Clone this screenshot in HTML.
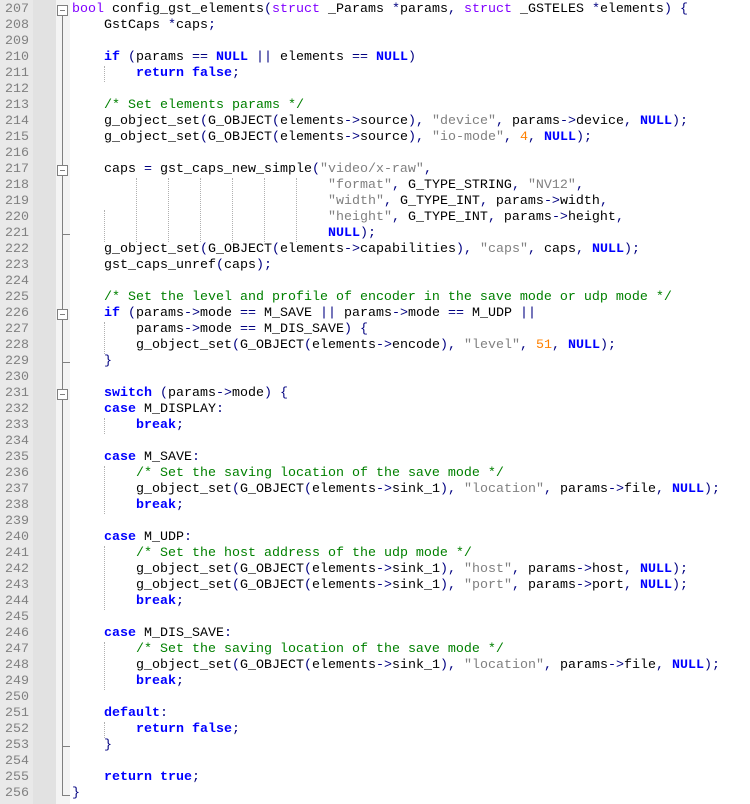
<!DOCTYPE html>
<html><head><meta charset="utf-8"><style>
html,body{margin:0;padding:0;background:#fff;width:750px;height:804px;overflow:hidden;position:relative}
#ln{position:absolute;left:0;top:0;width:33px;height:804px;background:#e9e9e9}
#ln2{position:absolute;left:33px;top:0;width:23px;height:804px;background:#e2e2e2}
#fm{position:absolute;left:56px;top:0;width:14px;height:804px;background:#f4f4f4}
.nums{position:absolute;left:0;top:2px;width:29px;text-align:right;color:#808080}
pre,.nums{font-family:"Liberation Mono",monospace;font-size:13.33px;line-height:16px;margin:0}
pre{position:absolute;left:72px;top:2px;color:#000}
.k{color:#0000ff;font-weight:bold}.t{color:#8000ff}.s{color:#808080}.n{color:#ff8000}.c{color:#008000}.o{color:#000080}
.v{position:absolute;width:1px;background:#808080}
.h{position:absolute;height:1px;background:#808080}
.b{position:absolute;width:9px;height:9px;border:1px solid #808080;background:#fff}
.b:after{content:"";position:absolute;left:2px;top:4px;width:5px;height:1px;background:#808080}
.g{position:absolute;width:0;border-left:1px dotted #b0b0b0}
</style></head><body>
<div id="ln"></div><div id="ln2"></div><div id="fm"></div>
<div class="nums">207<br>208<br>209<br>210<br>211<br>212<br>213<br>214<br>215<br>216<br>217<br>218<br>219<br>220<br>221<br>222<br>223<br>224<br>225<br>226<br>227<br>228<br>229<br>230<br>231<br>232<br>233<br>234<br>235<br>236<br>237<br>238<br>239<br>240<br>241<br>242<br>243<br>244<br>245<br>246<br>247<br>248<br>249<br>250<br>251<br>252<br>253<br>254<br>255<br>256</div>
<div class="v" style="left:62px;top:15px;height:781px"></div>
<div class="h" style="left:62px;top:795px;width:8px"></div>
<div class="h" style="left:62px;top:234px;width:8px"></div>
<div class="h" style="left:62px;top:362px;width:8px"></div>
<div class="h" style="left:62px;top:746px;width:8px"></div>
<div class="b" style="left:57px;top:5px"></div>
<div class="b" style="left:57px;top:165px"></div>
<div class="b" style="left:57px;top:309px"></div>
<div class="b" style="left:57px;top:389px"></div>
<div class="g" style="left:104px;top:66px;height:16px"></div>
<div class="g" style="left:104px;top:210px;height:32px"></div>
<div class="g" style="left:136px;top:178px;height:64px"></div>
<div class="g" style="left:168px;top:178px;height:64px"></div>
<div class="g" style="left:200px;top:178px;height:64px"></div>
<div class="g" style="left:232px;top:178px;height:64px"></div>
<div class="g" style="left:264px;top:178px;height:64px"></div>
<div class="g" style="left:296px;top:178px;height:64px"></div>
<div class="g" style="left:104px;top:322px;height:32px"></div>
<div class="g" style="left:104px;top:418px;height:16px"></div>
<div class="g" style="left:104px;top:466px;height:48px"></div>
<div class="g" style="left:104px;top:546px;height:64px"></div>
<div class="g" style="left:104px;top:642px;height:48px"></div>
<div class="g" style="left:104px;top:722px;height:16px"></div>
<pre><span class="t">bool</span> config_gst_elements<span class="o">(</span><span class="t">struct</span> _Params <span class="o">*</span>params<span class="o">,</span> <span class="t">struct</span> _GSTELES <span class="o">*</span>elements<span class="o">)</span> <span class="o">{</span>
    GstCaps <span class="o">*</span>caps<span class="o">;</span>

    <span class="k">if</span> <span class="o">(</span>params <span class="o">==</span> <span class="k">NULL</span> <span class="o">||</span> elements <span class="o">==</span> <span class="k">NULL</span><span class="o">)</span>
        <span class="k">return</span> <span class="k">false</span><span class="o">;</span>

    <span class="c">/* Set elements params */</span>
    g_object_set<span class="o">(</span>G_OBJECT<span class="o">(</span>elements<span class="o">-&gt;</span>source<span class="o">),</span> <span class="s">"device"</span><span class="o">,</span> params<span class="o">-&gt;</span>device<span class="o">,</span> <span class="k">NULL</span><span class="o">);</span>
    g_object_set<span class="o">(</span>G_OBJECT<span class="o">(</span>elements<span class="o">-&gt;</span>source<span class="o">),</span> <span class="s">"io-mode"</span><span class="o">,</span> <span class="n">4</span><span class="o">,</span> <span class="k">NULL</span><span class="o">);</span>

    caps <span class="o">=</span> gst_caps_new_simple<span class="o">(</span><span class="s">"video/x-raw"</span><span class="o">,</span>
                                <span class="s">"format"</span><span class="o">,</span> G_TYPE_STRING<span class="o">,</span> <span class="s">"NV12"</span><span class="o">,</span>
                                <span class="s">"width"</span><span class="o">,</span> G_TYPE_INT<span class="o">,</span> params<span class="o">-&gt;</span>width<span class="o">,</span>
                                <span class="s">"height"</span><span class="o">,</span> G_TYPE_INT<span class="o">,</span> params<span class="o">-&gt;</span>height<span class="o">,</span>
                                <span class="k">NULL</span><span class="o">);</span>
    g_object_set<span class="o">(</span>G_OBJECT<span class="o">(</span>elements<span class="o">-&gt;</span>capabilities<span class="o">),</span> <span class="s">"caps"</span><span class="o">,</span> caps<span class="o">,</span> <span class="k">NULL</span><span class="o">);</span>
    gst_caps_unref<span class="o">(</span>caps<span class="o">);</span>

    <span class="c">/* Set the level and profile of encoder in the save mode or udp mode */</span>
    <span class="k">if</span> <span class="o">(</span>params<span class="o">-&gt;</span>mode <span class="o">==</span> M_SAVE <span class="o">||</span> params<span class="o">-&gt;</span>mode <span class="o">==</span> M_UDP <span class="o">||</span>
        params<span class="o">-&gt;</span>mode <span class="o">==</span> M_DIS_SAVE<span class="o">)</span> <span class="o">{</span>
        g_object_set<span class="o">(</span>G_OBJECT<span class="o">(</span>elements<span class="o">-&gt;</span>encode<span class="o">),</span> <span class="s">"level"</span><span class="o">,</span> <span class="n">51</span><span class="o">,</span> <span class="k">NULL</span><span class="o">);</span>
    <span class="o">}</span>

    <span class="k">switch</span> <span class="o">(</span>params<span class="o">-&gt;</span>mode<span class="o">)</span> <span class="o">{</span>
    <span class="k">case</span> M_DISPLAY<span class="o">:</span>
        <span class="k">break</span><span class="o">;</span>

    <span class="k">case</span> M_SAVE<span class="o">:</span>
        <span class="c">/* Set the saving location of the save mode */</span>
        g_object_set<span class="o">(</span>G_OBJECT<span class="o">(</span>elements<span class="o">-&gt;</span>sink_1<span class="o">),</span> <span class="s">"location"</span><span class="o">,</span> params<span class="o">-&gt;</span>file<span class="o">,</span> <span class="k">NULL</span><span class="o">);</span>
        <span class="k">break</span><span class="o">;</span>

    <span class="k">case</span> M_UDP<span class="o">:</span>
        <span class="c">/* Set the host address of the udp mode */</span>
        g_object_set<span class="o">(</span>G_OBJECT<span class="o">(</span>elements<span class="o">-&gt;</span>sink_1<span class="o">),</span> <span class="s">"host"</span><span class="o">,</span> params<span class="o">-&gt;</span>host<span class="o">,</span> <span class="k">NULL</span><span class="o">);</span>
        g_object_set<span class="o">(</span>G_OBJECT<span class="o">(</span>elements<span class="o">-&gt;</span>sink_1<span class="o">),</span> <span class="s">"port"</span><span class="o">,</span> params<span class="o">-&gt;</span>port<span class="o">,</span> <span class="k">NULL</span><span class="o">);</span>
        <span class="k">break</span><span class="o">;</span>

    <span class="k">case</span> M_DIS_SAVE<span class="o">:</span>
        <span class="c">/* Set the saving location of the save mode */</span>
        g_object_set<span class="o">(</span>G_OBJECT<span class="o">(</span>elements<span class="o">-&gt;</span>sink_1<span class="o">),</span> <span class="s">"location"</span><span class="o">,</span> params<span class="o">-&gt;</span>file<span class="o">,</span> <span class="k">NULL</span><span class="o">);</span>
        <span class="k">break</span><span class="o">;</span>

    <span class="k">default</span><span class="o">:</span>
        <span class="k">return</span> <span class="k">false</span><span class="o">;</span>
    <span class="o">}</span>

    <span class="k">return</span> <span class="k">true</span><span class="o">;</span>
<span class="o">}</span></pre>
</body></html>
